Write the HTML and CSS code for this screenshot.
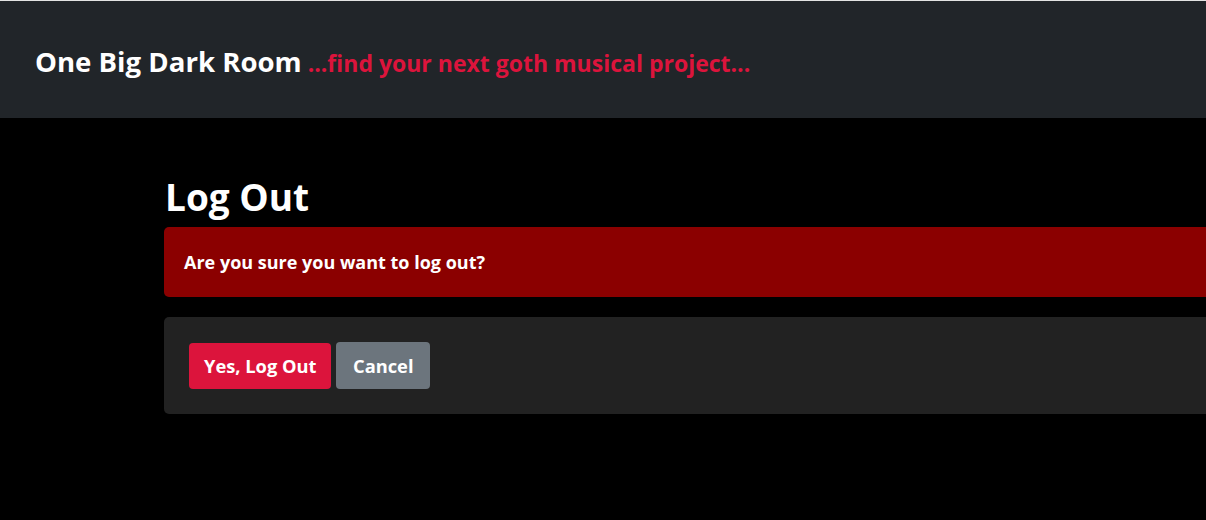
FILE: index.html
```html
<!DOCTYPE html>
<html lang="en">
<head>
<meta charset="utf-8">
<title>Log Out - One Big Dark Room</title>
<link rel="stylesheet" href="styles.css">
</head>
<body>
<header class="site-header">
  <div class="brand">
    <span class="brand-name">One Big Dark Room</span>
    <span class="brand-tagline">...find your next goth musical project...</span>
  </div>
</header>
<main class="page">
  <h1 class="page-title">Log Out</h1>
  <div class="alert">Are you sure you want to log out?</div>
  <div class="card">
    <form class="actions">
      <button type="button" class="btn btn-danger">Yes, Log Out</button>
      <button type="button" class="btn btn-secondary">Cancel</button>
    </form>
  </div>
</main>
</body>
</html>
```

FILE: styles.css
```css
html, body {
  margin: 0;
  padding: 0;
  background: #000;
  overflow: hidden;
}
body {
  font-family: "Open Sans", "Noto Sans", sans-serif;
  color: #fff;
  width: 1206px;
  height: 520px;
}
.site-header {
  border-top: 1px solid #e3e3e3;
  background: #212529;
  height: 117px;
  display: flex;
  align-items: center;
  padding-left: 35px;
}
.brand {
  display: flex;
  align-items: baseline;
  gap: 6px;
  margin-top: 3px;
}
.brand-name {
  font-size: 27.6px;
  font-weight: 700;
  color: #fff;
}
.brand-tagline {
  font-size: 23px;
  font-weight: 700;
  color: #dc143c;
}
.page {
  margin-left: 164px;
  width: 1100px;
  padding-top: 57px;
}
.page-title {
  margin: 0 0 8px 1px;
  font-size: 37px;
  font-weight: 700;
  line-height: 44px;
}
.alert {
  background: #8b0000;
  border-radius: 5px;
  height: 70px;
  box-sizing: border-box;
  padding: 0 20px;
  display: flex;
  align-items: center;
  font-size: 18px;
  font-weight: 700;
  margin-bottom: 20px;
}
.card {
  background: #222;
  border-radius: 5px;
  height: 97px;
  box-sizing: border-box;
  padding: 25px;
}
.actions {
  display: flex;
  align-items: center;
  gap: 5px;
  margin: 0;
}
.btn {
  font-family: inherit;
  font-size: 18.3px;
  font-weight: 700;
  color: #fff;
  border: none;
  border-radius: 4px;
  height: 46px;
  padding: 0 15px;
  cursor: pointer;
}
.btn-danger {
  background: #dc143c;
}
.btn-secondary {
  background: #6c757d;
  height: 47px;
  padding: 0 16.5px;
}
```
